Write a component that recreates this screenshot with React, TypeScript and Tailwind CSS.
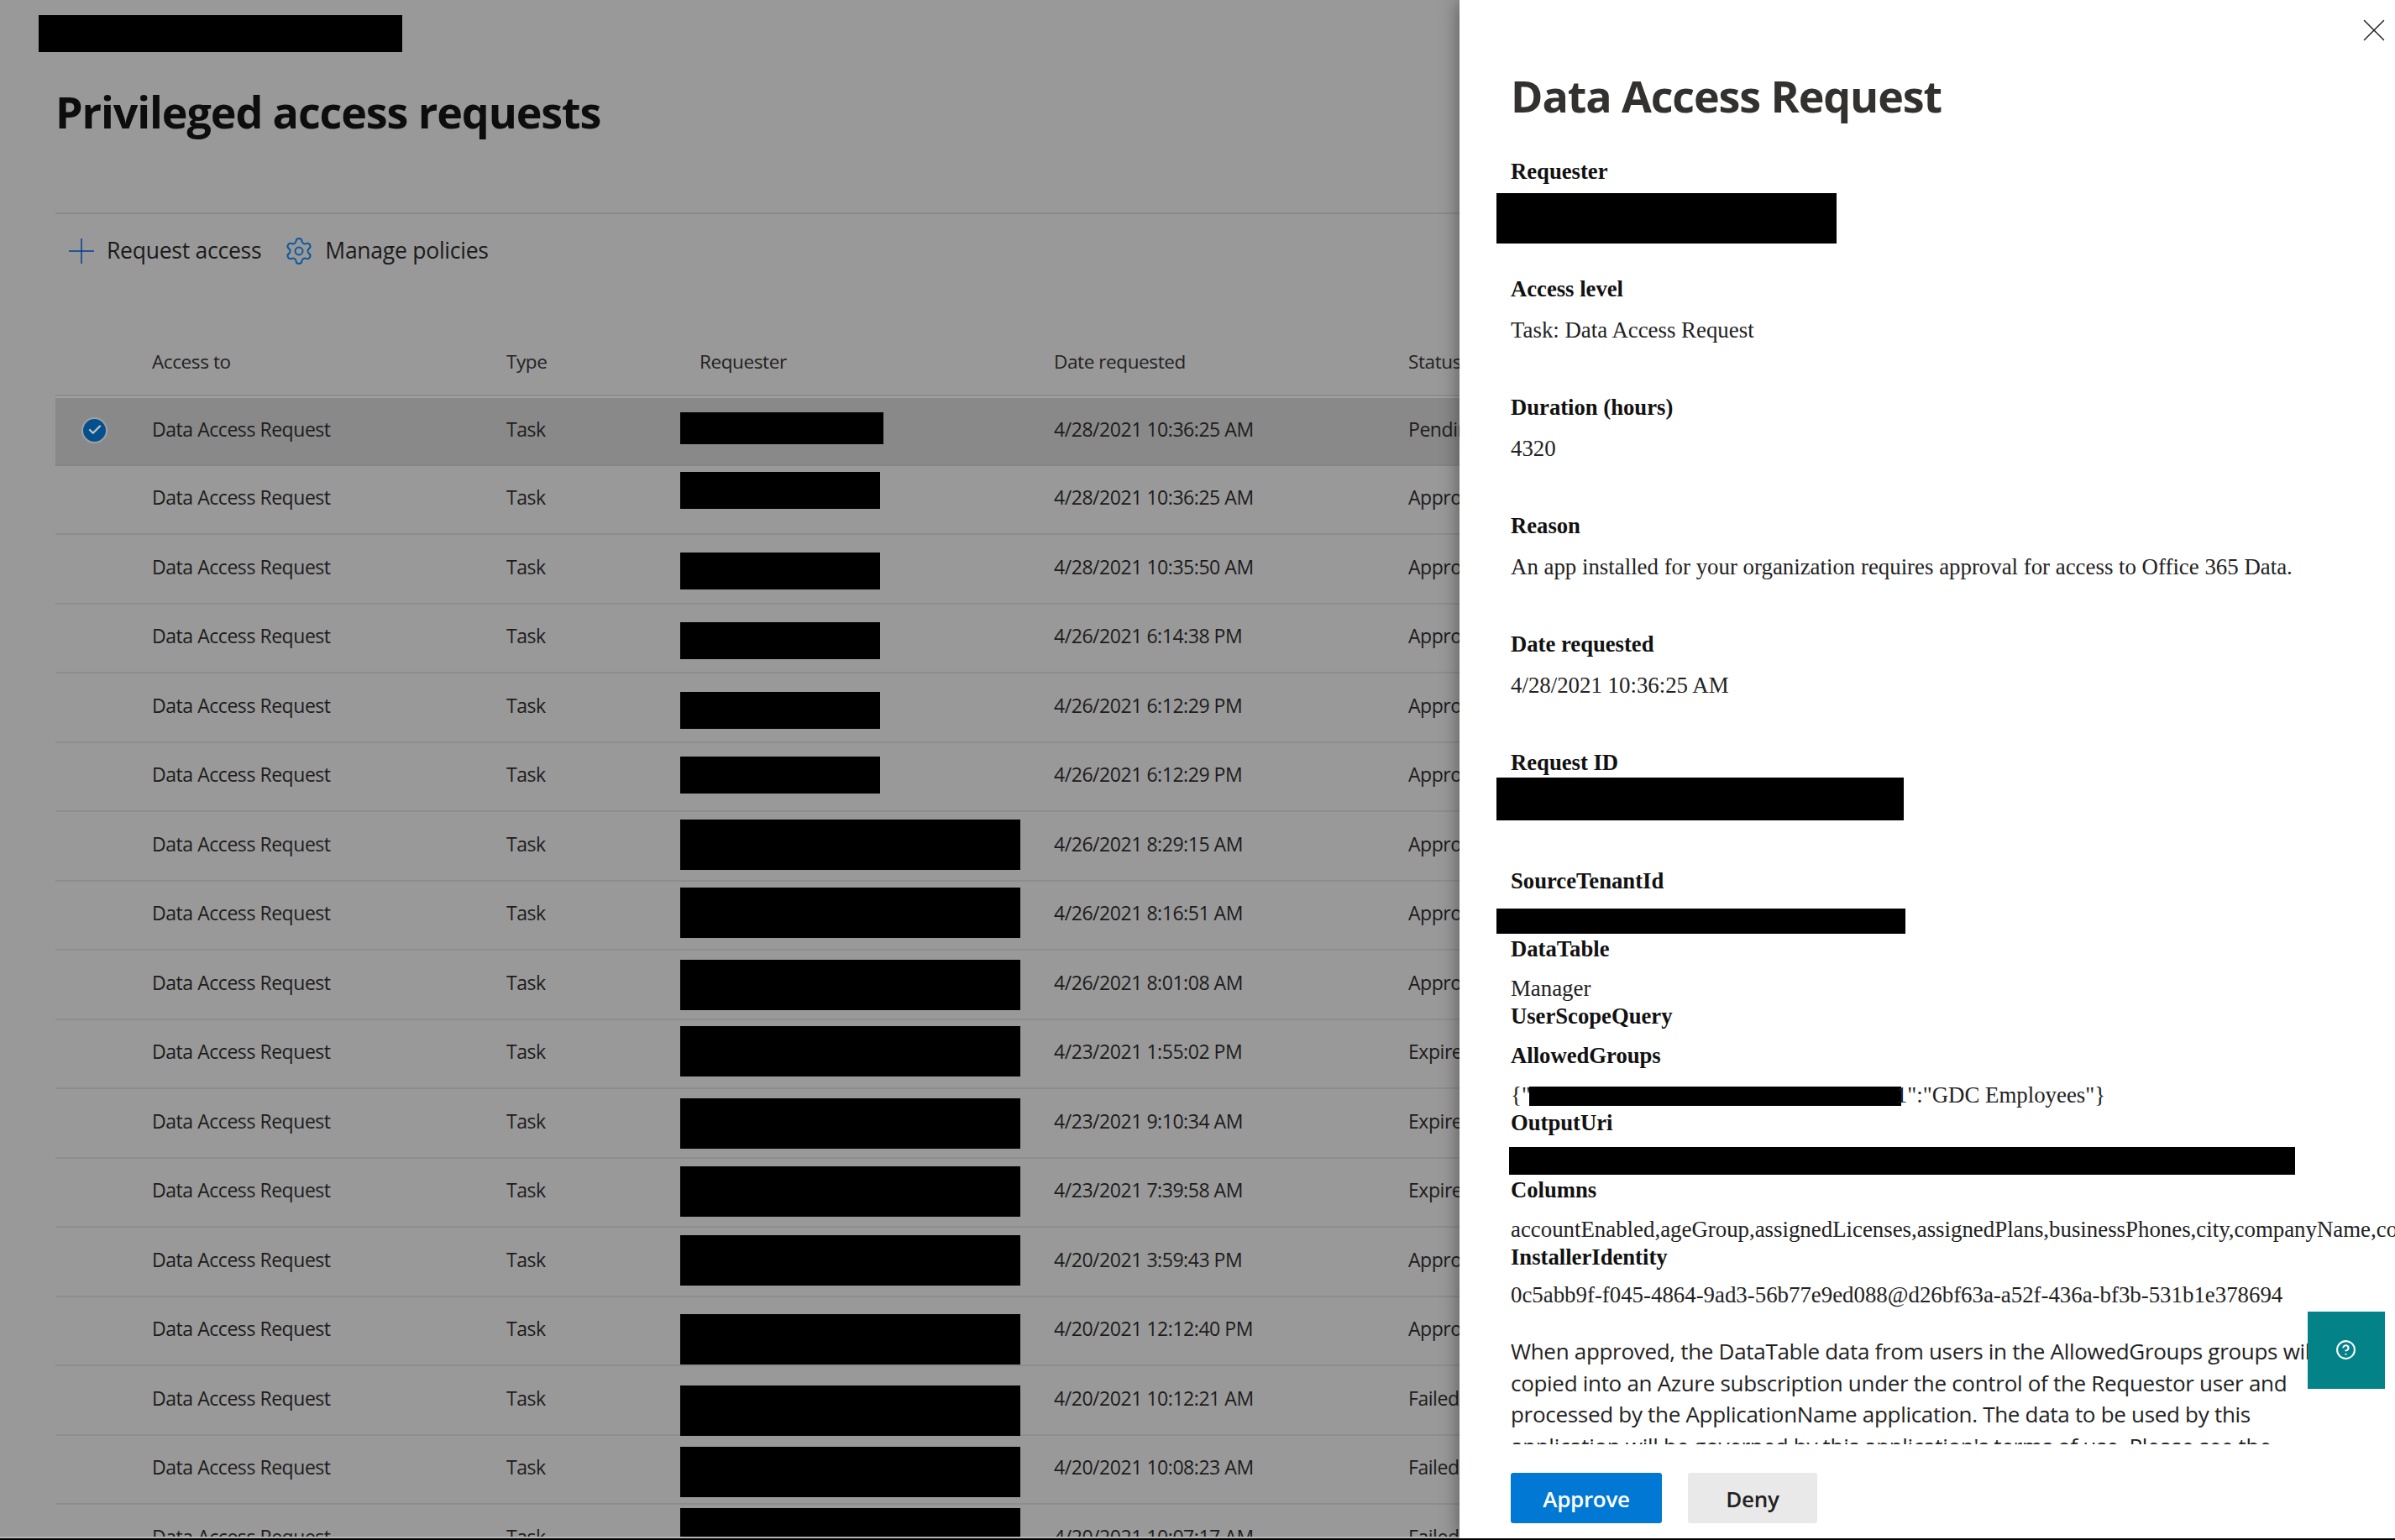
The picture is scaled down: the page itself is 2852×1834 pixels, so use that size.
import { Check, CircleHelp, Settings, X } from 'lucide-react';

const SEGOE = "font-['Open_Sans',sans-serif]";
const SERIF = "font-['Liberation_Serif',serif]";
const COLS = 'grid grid-cols-[115px_422px_230px_422px_422px_1fr]';

// bar = redaction drawn over the requester cell
const rows = [
  { date: '4/28/2021 10:36:25 AM', status: 'Pending', bar: 'top-[17px] h-[38px] w-[242px]' },
  { date: '4/28/2021 10:36:25 AM', status: 'Approved', bar: 'top-[7.5px] h-[44px] w-[238px]' },
  { date: '4/28/2021 10:35:50 AM', status: 'Approved', bar: 'top-[21px] h-[44px] w-[238px]' },
  { date: '4/26/2021 6:14:38 PM', status: 'Approved', bar: 'top-[21.5px] h-[44px] w-[238px]' },
  { date: '4/26/2021 6:12:29 PM', status: 'Approved', bar: 'top-[22px] h-[44px] w-[238px]' },
  { date: '4/26/2021 6:12:29 PM', status: 'Approved', bar: 'top-[16.5px] h-[44px] w-[238px]' },
  { date: '4/26/2021 8:29:15 AM', status: 'Approved', bar: 'top-[9px] h-[60px] w-[405px]' },
  { date: '4/26/2021 8:16:51 AM', status: 'Approved', bar: 'top-[7.5px] h-[60px] w-[405px]' },
  { date: '4/26/2021 8:01:08 AM', status: 'Approved', bar: 'top-[11px] h-[60px] w-[405px]' },
  { date: '4/23/2021 1:55:02 PM', status: 'Expired', bar: 'top-[7.5px] h-[60px] w-[405px]' },
  { date: '4/23/2021 9:10:34 AM', status: 'Expired', bar: 'top-[11px] h-[60px] w-[405px]' },
  { date: '4/23/2021 7:39:58 AM', status: 'Expired', bar: 'top-[9.5px] h-[60px] w-[405px]' },
  { date: '4/20/2021 3:59:43 PM', status: 'Approved', bar: 'top-[9px] h-[60px] w-[405px]' },
  { date: '4/20/2021 12:12:40 PM', status: 'Approved', bar: 'top-[20.5px] h-[60px] w-[405px]' },
  { date: '4/20/2021 10:12:21 AM', status: 'Failed', bar: 'top-[23px] h-[60px] w-[405px]' },
  { date: '4/20/2021 10:08:23 AM', status: 'Failed', bar: 'top-[13.5px] h-[60px] w-[405px]' },
  { date: '4/20/2021 10:07:17 AM', status: 'Failed', bar: 'top-[4px] h-[60px] w-[405px]' },
];

function Label({ children, className = '' }: { children: React.ReactNode; className?: string }) {
  return <div className={`h-[31px] text-[26.67px] leading-[31px] font-bold text-[#111] ${className}`}>{children}</div>;
}

function Value({ children, className = '' }: { children: React.ReactNode; className?: string }) {
  return <div className={`h-[31px] text-[26.85px] leading-[31px] text-[#222] whitespace-nowrap ${className}`}>{children}</div>;
}

export default function App() {
  return (
    <div className="h-[1834px] w-[2852px] overflow-hidden flex flex-col bg-black">
      <div className={`relative h-[1832px] overflow-hidden bg-[#999999] ${SEGOE}`}>
        <div className="ml-[46px] pt-[18px]">
          <div className="w-[433px] h-[44px] bg-black" />
        </div>

        <div className="px-[66px] pt-[41px]">
          <h1 className="h-[60px] text-[52px] leading-[60px] font-bold text-[#0d0d0d] tracking-[-1.1px]">Privileged access requests</h1>
          <div className="mt-[90px] h-[2px] bg-[#8a8a8a]" />

          <div className="h-[86px] pl-[16px] pt-[2px] flex items-center text-[#1a1a1a] text-[26.5px] tracking-[-0.25px]">
            <svg width="30" height="30" viewBox="0 0 30 30" className="text-[#003e92]">
              <path d="M15 0V30M0 15H30" stroke="currentColor" strokeWidth="1.5" fill="none" />
            </svg>
            <span className="ml-[15px]">Request access</span>
            <Settings size={36} strokeWidth={1.3} className="ml-[27px] -mr-[3px] text-[#0a589c]" />
            <span className="ml-[16px]">Manage policies</span>
          </div>

          <div className={`${COLS} w-[2786px] mt-[51px] h-[80px] items-center border-b-2 border-[#8d8d8d] text-[22.5px] tracking-[-0.4px] text-[#222]`}>
            <div />
            <div>Access to</div>
            <div>Type</div>
            <div>Requester</div>
            <div>Date requested</div>
            <div>Status</div>
          </div>

          {rows.map((row, i) => (
            <div
              key={i}
              className={`${COLS} relative w-[2786px] h-[82.5px] box-border pb-[5px] items-center border-b-2 border-[#8d8d8d] text-[23px] tracking-[-0.45px] text-[#1c1c1c] ${i === 0 ? 'bg-[#898989] border-t-2 border-t-[#a0a0a0] border-b-[#858585]' : ''}`}
            >
              <div className="pl-[31px] pt-[3px] flex">
                {i === 0 && (
                  <span className="w-[31px] h-[31px] rounded-full bg-[#04508f] border-2 border-[#a0a0a0] flex items-center justify-center">
                    <Check size={18} strokeWidth={3} className="text-[#c4c4c4]" />
                  </span>
                )}
              </div>
              <div>Data Access Request</div>
              <div>Task</div>
              <div />
              <div>{row.date}</div>
              <div>{row.status}</div>
              <div className={`absolute left-[744px] bg-black ${row.bar}`} />
            </div>
          ))}
        </div>

        <div className="absolute left-0 right-0 bottom-0 h-[2px] bg-[#b4b4b4]" />

        {/* Side panel */}
        <div className="absolute right-0 top-0 bottom-0 w-[1114px] bg-white shadow-[0_0_22px_rgba(0,0,0,0.45)] overflow-hidden pl-[61px]">
          <button className="absolute top-[13px] right-[2px] text-[#222]">
            <X size={46} strokeWidth={1.5} absoluteStrokeWidth />
          </button>

          <h2 className="mt-[84px] h-[60px] text-[52px] leading-[60px] font-bold text-[#323130] tracking-[-1.1px]">Data Access Request</h2>

          <div className={`-ml-[20px] pl-[20px] mt-[44.5px] h-[1531.5px] overflow-hidden ${SERIF}`}>
            <Label>Requester</Label>
            <div className="-ml-[17px] mt-[10.5px] w-[405px] h-[60px] bg-black" />

            <Label className="mt-[38.5px]">Access level</Label>
            <Value className="mt-[18px]">Task: Data Access Request</Value>

            <Label className="mt-[61px]">Duration (hours)</Label>
            <Value className="mt-[18px]">4320</Value>

            <Label className="mt-[61px]">Reason</Label>
            <Value className="mt-[18px]">An app installed for your organization requires approval for access to Office 365 Data.</Value>

            <Label className="mt-[61px]">Date requested</Label>
            <Value className="mt-[18px]">4/28/2021 10:36:25 AM</Value>

            <Label className="mt-[61px]">Request ID</Label>
            <div className="-ml-[17px] mt-[2.5px] w-[485px] h-[51px] bg-black" />

            <Label className="mt-[56.5px]">SourceTenantId</Label>
            <div className="-ml-[17px] mt-[17.5px] w-[487px] h-[30px] bg-black" />

            <Label className="mt-[2.5px]">DataTable</Label>
            <Value className="mt-[16px]">Manager</Value>
            <Label className="mt-[2px]">UserScopeQuery</Label>
            <Label className="mt-[16px]">AllowedGroups</Label>
            <Value className="mt-[16px]">
              {'{"'}
              <span className="inline-block align-top mt-[5px] -ml-[2px] -mr-[6px] w-[443px] h-[23px] bg-black" />
              {'1":"GDC Employees"}'}
            </Value>
            <Label className="mt-[2px]">OutputUri</Label>
            <div className="-ml-[2px] mt-[13.5px] w-[936px] h-[33px] bg-black" />
            <Label className="mt-[2.5px]">Columns</Label>
            <Value className="mt-[16px]">accountEnabled,ageGroup,assignedLicenses,assignedPlans,businessPhones,city,companyName,country,createdDateTime</Value>
            <Label className="mt-[2px]">InstallerIdentity</Label>
            <Value className="mt-[14px]">0c5abb9f-f045-4864-9ad3-56b77e9ed088@d26bf63a-a52f-436a-bf3b-531b1e378694</Value>

            <p className={`mt-[33.5px] w-[1015px] text-[26px] leading-[37.5px] tracking-[-0.3px] text-[#222] ${SEGOE}`}>
              When approved, the DataTable data from users in the AllowedGroups groups will be copied into an Azure subscription under the control of the Requestor user and processed by the ApplicationName application. The data to be used by this application will be governed by this application's terms of use. Please see the
            </p>
          </div>

          <div className="mt-[34px] flex gap-[31px]">
            <button className="w-[180px] h-[60px] pt-[2px] rounded-[3px] bg-[#0078d4] text-white text-[26px] font-semibold tracking-[-0.3px]">Approve</button>
            <button className="w-[154px] h-[60px] pt-[2px] rounded-[3px] bg-[#e9e9e9] text-[#222] text-[26px] font-semibold tracking-[-0.3px]">Deny</button>
          </div>

          <button className="absolute left-[1010px] top-[1562px] w-[92px] h-[92px] pb-[2px] pr-[2px] bg-[#038387] flex items-center justify-center text-white">
            <CircleHelp size={25} strokeWidth={2} />
          </button>
        </div>
      </div>
    </div>
  );
}
